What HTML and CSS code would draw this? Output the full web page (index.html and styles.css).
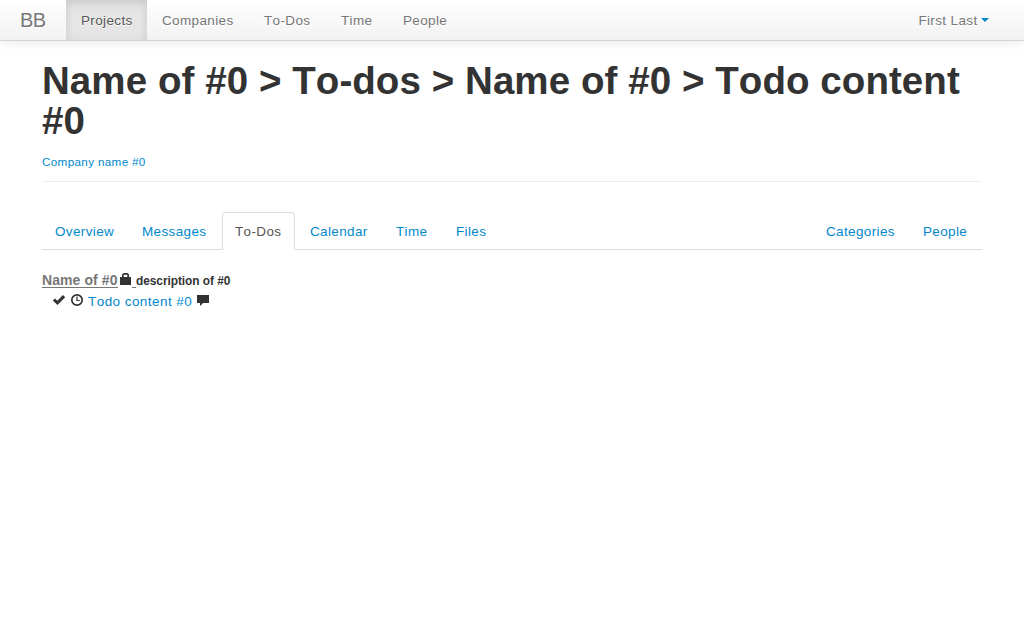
FILE: index.html
```html
<!DOCTYPE html>
<html lang="en">
<head>
<meta charset="utf-8">
<title>BB</title>
<link rel="stylesheet" href="styles.css">
</head>
<body>
<header class="navbar">
  <a class="brand">BB</a>
  <nav class="nav">
    <a class="nav-link active w51">Projects</a>
    <a class="nav-link w72">Companies</a>
    <a class="nav-link w47">To-Dos</a>
    <a class="nav-link w32">Time</a>
    <a class="nav-link w44">People</a>
  </nav>
  <a class="nav-link user">First Last<b class="caret"></b></a>
</header>
<main class="container">
  <div class="page-header">
    <h1><span class="trail">Name of #0 &gt; To-dos &gt; Name of #0 &gt; Todo content</span> #0</h1>
    <a class="company">Company name #0</a>
  </div>
  <nav class="tabs">
    <a class="tab w59">Overview</a>
    <a class="tab w65">Messages</a>
    <a class="tab current w47">To-Dos</a>
    <a class="tab w58">Calendar</a>
    <a class="tab w32">Time</a>
    <a class="tab w30">Files</a>
    <a class="tab push w69">Categories</a>
    <a class="tab w44">People</a>
  </nav>
  <div class="list-title">
    <a class="list-name">Name of #0</a>
    <svg class="icon lock" viewBox="0 0 14 14"><path fill-rule="evenodd" d="M2 5h2V2.500L5.500 1h4L11 2.500V5h2v8H2zM5.700 5h3.600V2.700H5.700z"/></svg>
    <span class="gap"></span>
    <strong class="description">description of #0</strong>
  </div>
  <div class="todo">
    <svg class="icon" viewBox="0 0 14 14"><path d="M.8 7.600 3 5.400l2.400 2.300L10.900 2l2.300 2.200L5.500 12z"/></svg>
    <svg class="icon clock" viewBox="0 0 14 14"><circle cx="7" cy="7" r="5.200"/><path stroke-width="1.200" d="M7 3.500V7.500H9.700"/></svg>
    <a class="todo-link">Todo content #0</a>
    <svg class="icon comment" viewBox="0 0 14 14"><path d="M1 2h12v8H7l-3 3v-3H1z"/></svg>
  </div>
</main>
</body>
</html>
```
FILE: styles.css
```css
* { box-sizing: border-box; }
body {
  margin: 0;
  background: #fff;
  color: #333;
  font: 14px/20px "Liberation Sans", Arial, sans-serif;
  font-kerning: none;
}
a { color: #08c; white-space: nowrap; }
.navbar {
  display: flex;
  height: 41px;
  padding-right: 20px;
  border-bottom: 1px solid #d4d4d4;
  background: linear-gradient(#fff, #f2f2f2);
  box-shadow: 0 1px 10px rgba(0, 0, 0, .1);
}
.brand {
  width: 66px;
  padding: 10px 20px;
  color: #777;
  font-size: 20px;
  letter-spacing: -.6px;
  text-shadow: 0 1px 0 #fff;
}
.nav { display: flex; }
.nav-link {
  box-sizing: content-box;
  height: 20px;
  padding: 10px 15px;
  color: #777;
  font-size: 13.5px;
  line-height: 22px;
  letter-spacing: .36px;
  text-shadow: 0 1px 0 #fff;
}
.nav-link.active {
  color: #555;
  background: #e5e5e5;
  box-shadow: inset 0 3px 8px rgba(0, 0, 0, .125);
}
.user { display: flex; margin-left: auto; }
.caret {
  width: 8px;
  height: 4px;
  margin: 8px 0 0 3.500px;
  border: 4px solid transparent;
  border-top-color: #08c;
  border-bottom: 0;
}
.w30 { width: 30px; }
.w32 { width: 32px; }
.w44 { width: 44px; }
.w47 { width: 47px; }
.w51 { width: 51px; }
.w58 { width: 58px; }
.w59 { width: 59px; }
.w65 { width: 65px; }
.w69 { width: 69px; }
.w72 { width: 72px; }
.container { width: 940px; margin: 20px auto 0; }
.page-header {
  height: 121px;
  margin-bottom: 30px;
  border-bottom: 1px solid #eee;
}
h1 { margin: 0 0 11px; font-size: 38.5px; line-height: 40px; letter-spacing: .07px; }
.trail { white-space: nowrap; }
.company { display: block; font-size: 11.7px; letter-spacing: .33px; }
.tabs {
  display: flex;
  height: 38px;
  border-bottom: 1px solid #ddd;
}
.tab {
  box-sizing: content-box;
  height: 20px;
  margin-right: 2px;
  padding: 8px 12px;
  border: 1px solid transparent;
  font-size: 13.5px;
  line-height: 22px;
  letter-spacing: .36px;
}
.tab.current {
  color: #555;
  background: #fff;
  border-color: #ddd;
  border-bottom-color: #fff;
  border-radius: 4px 4px 0 0;
}
.push { margin-left: auto; }
.list-title { display: flex; height: 20px; margin-top: 20px; }
.list-name {
  width: 76px;
  height: 18px;
  border-bottom: 1px solid #777;
  color: #777;
  font-weight: bold;
  letter-spacing: .08px;
}
.icon { width: 14px; height: 14px; fill: #333; }
.lock { margin-top: 2px; }
.gap { width: 4px; height: 18px; border-bottom: 1px solid #777; }
.description { font-size: 11.9px; line-height: 22px; letter-spacing: -.05px; white-space: nowrap; }
.todo { display: flex; padding-left: 10px; }
.todo .icon { margin-top: 3px; }
.todo .clock { margin-left: 4px; fill: none; stroke: #333; stroke-width: 1.700; }
.todo-link { width: 104px; margin-left: 4px; font-size: 13.5px; line-height: 23px; letter-spacing: .44px; }
.todo .comment { margin-left: 4px; }
```
